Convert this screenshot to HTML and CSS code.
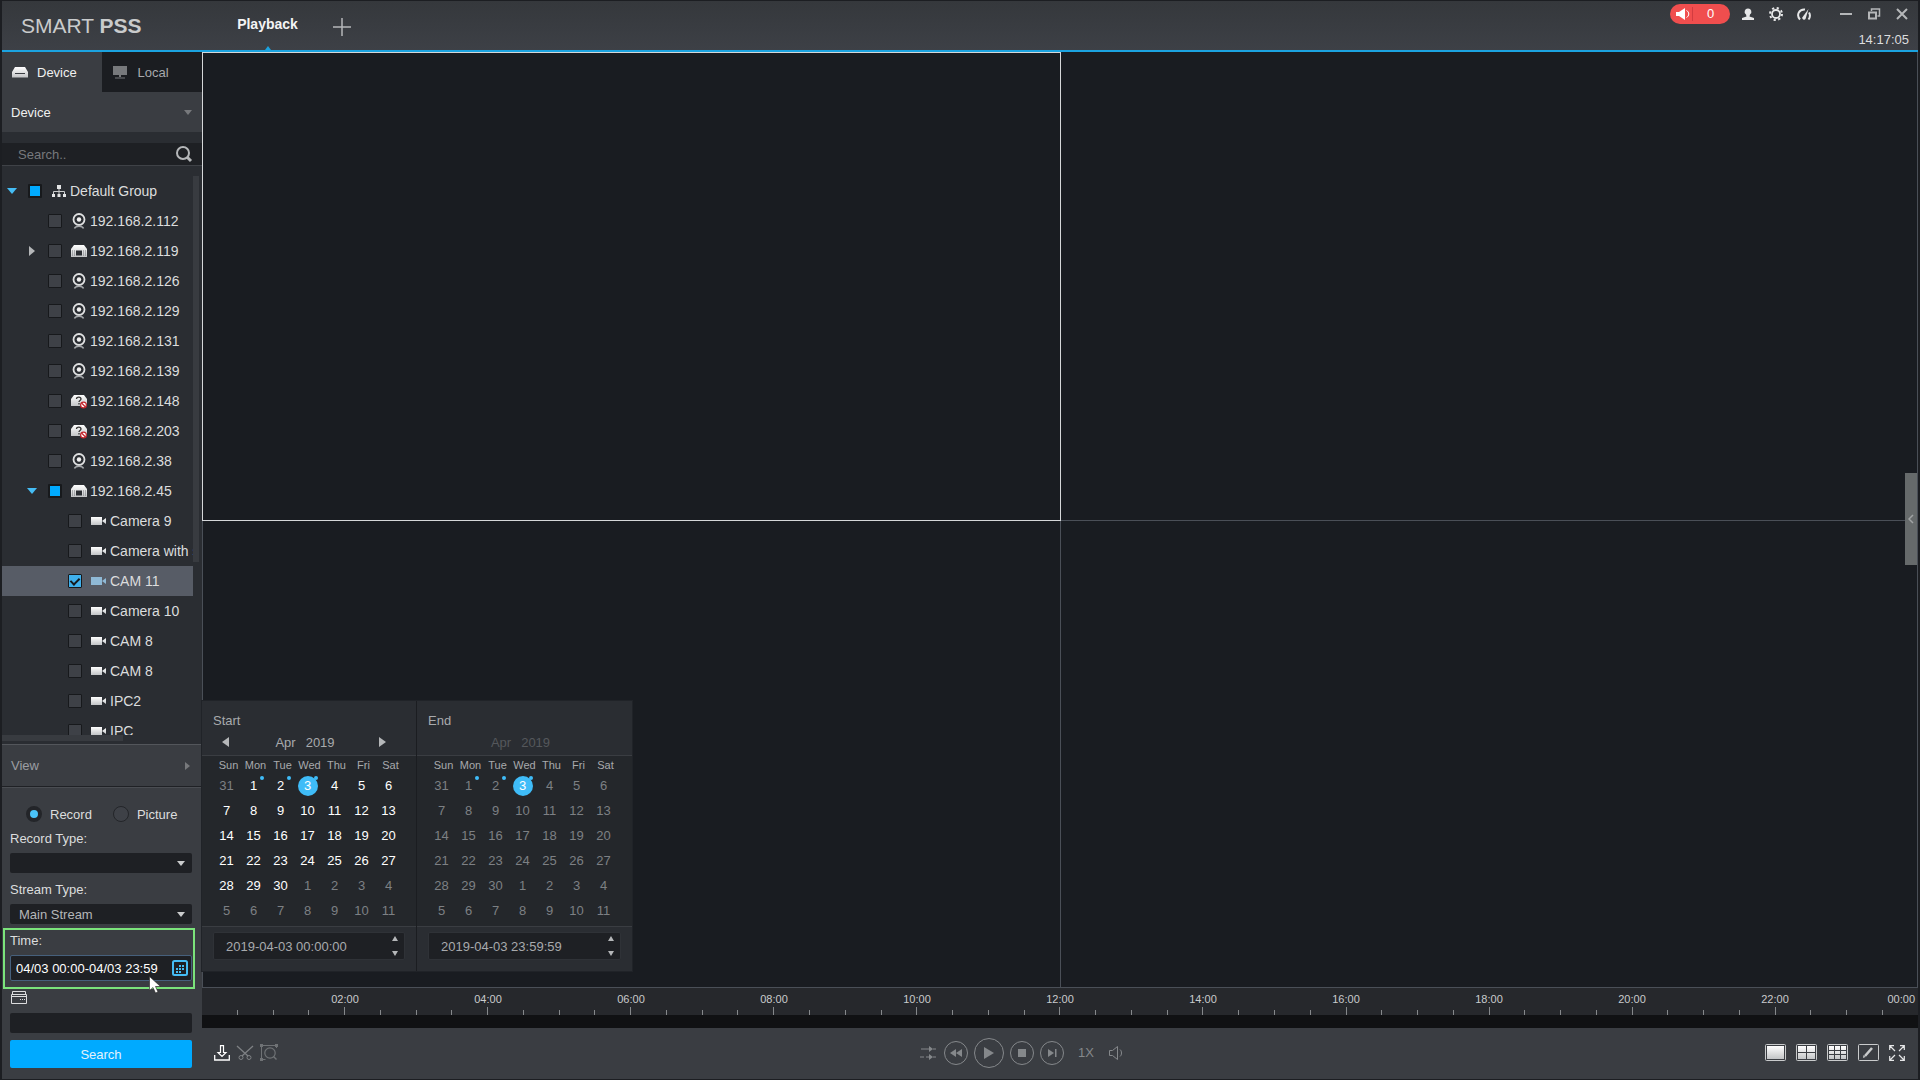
FILE: index.html
```html
<!DOCTYPE html>
<html lang="en">
<head>
  <meta charset="UTF-8" />
  <meta name="viewport" content="width=device-width, initial-scale=1.0" />
  <title>SMART PSS</title>
  <link rel="stylesheet" href="styles.css">
</head>
<body>
  <!-- icon sprite -->
  <svg class="sprite" width="0" height="0" aria-hidden="true">
    <defs>
      <linearGradient id="metal" x1="0" y1="0" x2="0" y2="1">
        <stop offset="0" stop-color="#ffffff" />
        <stop offset="1" stop-color="#c2c4c6" />
      </linearGradient>
    </defs>
    <symbol id="i-group" viewBox="0 0 16 16">
      <path d="M6 2h4v4H6zM1 11h3v3H1zM6.500 11h3v3h-3zM12 11h3v3h-3z" fill="#e4e5e6" />
      <path d="M8 6v5M2.500 11V8.500h11V11" fill="none" stroke="#c9cbcc" />
    </symbol>
    <symbol id="i-dome" viewBox="0 0 16 16">
      <circle cx="8" cy="6.500" r="5.500" fill="none" stroke="#dfe0e1" stroke-width="1.800" />
      <circle cx="8" cy="6.500" r="2.200" fill="#f0f0f0" />
      <path d="M3.500 15.500c1-3 8-3 9 0" fill="none" stroke="#a5a8ab" stroke-width="1.400" />
    </symbol>
    <symbol id="i-nvr" viewBox="0 0 16 16">
      <path d="M3 2h10l3 4v8H0V6z" fill="url(#metal)" />
      <path d="M5 7.500h6v5H5z" fill="#2a2d32" />
      <path d="M1 8h3M1 10h3M1 12h3M12 8h3M12 10h3M12 12h3" stroke="#5a5d62" stroke-width=".8" stroke-dasharray="1 1" />
    </symbol>
    <symbol id="i-offline" viewBox="0 0 16 16">
      <path d="M3 2h10l3 4v7H0V6z" fill="url(#metal)" />
      <path d="M5.500 6c0-2.500 4.500-2.500 4.500 0 0 1.500-2 1.500-2 3M8 10v1.500" fill="none" stroke="#333" stroke-width="1.300" />
      <circle cx="12.500" cy="12" r="2.900" fill="#fff" stroke="#c3242b" stroke-width="1.200" />
      <path d="M10.500 10l4 4" stroke="#c3242b" stroke-width="1.300" />
    </symbol>
    <symbol id="i-cam" viewBox="0 0 16 16">
      <path d="M0 4h11v8H0zM11 8l4-3v6z" fill="url(#metal)" />
    </symbol>
    <symbol id="i-cam-on" viewBox="0 0 16 16">
      <path d="M0 4h11v8H0zM11 8l4-3v6z" fill="#8fb9d6" />
    </symbol>
  </svg>

  <header class="titlebar">
    <h1 class="logo">SMART <b>PSS</b></h1>
    <nav class="pages">
      <a class="page active" href="#">Playback</a>
      <button class="add-page" aria-label="Add tab">
        <svg width="18" height="18" viewBox="0 0 18 18"><path d="M9 0v18M0 9h18" stroke="#b5b7b9" stroke-width="1.500" /></svg>
      </button>
    </nav>
    <div class="status">
      <div class="status-icons">
        <button class="alarm" aria-label="Alarms">
          <svg width="14" height="12" viewBox="0 0 14 12"><path d="M0 4h3l6-4v12L3 8H0z" fill="#fff" /><path d="M10.500 2.500c3 1.500 3 5.500 0 7" fill="none" stroke="#fff" /></svg>
          <span>0</span>
        </button>
        <button class="tool" aria-label="User">
          <svg width="14" height="14" viewBox="0 0 14 14"><path d="M7 1.500a3.300 3.300 0 0 0-2 6L5.500 9.500 1 11v2h12v-2L8.500 9.500 9 7.500a3.300 3.300 0 0 0-2-6z" fill="#e6e7e8" /></svg>
        </button>
        <button class="tool" aria-label="Settings">
          <svg width="14" height="14" viewBox="0 0 14 14"><circle cx="7" cy="7" r="4" fill="none" stroke="#e6e7e8" stroke-width="1.800" /><circle cx="7" cy="7" r="6" fill="none" stroke="#e6e7e8" stroke-width="2" stroke-dasharray="2.200 2.510" /></svg>
        </button>
        <button class="tool" aria-label="System load">
          <svg width="14" height="14" viewBox="0 0 14 14"><path d="M3 12.500C-1 8 2 2 8 2.500M12 5.500c1.500 2.500 1 5-.5 7" fill="none" stroke="#e6e7e8" stroke-width="2" /><path d="M11.500 2L8.500 12a1.800 1.800 0 0 1-3.200-1.500z" fill="#e6e7e8" /></svg>
        </button>
        <button class="tool min" aria-label="Minimize">
          <svg width="14" height="14" viewBox="0 0 14 14"><path d="M1 7h12" stroke="#b5b7b9" stroke-width="2" /></svg>
        </button>
        <button class="tool" aria-label="Restore">
          <svg width="14" height="14" viewBox="0 0 14 14"><path d="M4.500 4V2h8v7h-2" fill="none" stroke="#b5b7b9" stroke-width="1.500" /><path d="M2 5.500h7v6H2z" fill="none" stroke="#b5b7b9" stroke-width="2" /></svg>
        </button>
        <button class="tool" aria-label="Close">
          <svg width="14" height="14" viewBox="0 0 14 14"><path d="M2 2l10 10M12 2L2 12" stroke="#b5b7b9" stroke-width="2" /></svg>
        </button>
      </div>
      <time class="clock">14:17:05</time>
    </div>
  </header>

  <div class="main">
    <aside class="sidebar">
      <div class="tabs">
        <button class="tab active">
          <svg width="16" height="12" viewBox="0 0 16 12"><path d="M3 1h10l3 5v5.500H0V6z" fill="url(#metal)" /><path d="M3 7.500h10" stroke="#3a3d42" /></svg>
          Device
        </button>
        <button class="tab">
          <svg width="14" height="13" viewBox="0 0 14 13"><path d="M0 0h14v9H0zM2 11.500h10v1H2zM6 9h2v2H6z" fill="#77797c" /></svg>
          Local
        </button>
      </div>
      <button class="section-title">Device <span class="caret down dim"></span></button>
      <div class="search">
        <input type="text" placeholder="Search.." aria-label="Search devices" />
        <svg width="18" height="18" viewBox="0 0 18 18"><circle cx="8" cy="8" r="6" fill="none" stroke="#b5b7b9" stroke-width="2" /><path d="M12 12l4 4" stroke="#b5b7b9" stroke-width="3" /></svg>
      </div>

      <div class="tree-wrap">
        <div class="tree">
          <div class="node"><button class="twist open" aria-label="Collapse"></button><label><input type="checkbox" class="partial" /><svg><use href="#i-group" /></svg>Default Group</label></div>
          <div class="node l1"><span class="twist"></span><label><input type="checkbox" /><svg><use href="#i-dome" /></svg>192.168.2.112</label></div>
          <div class="node l1"><button class="twist closed" aria-label="Expand"></button><label><input type="checkbox" /><svg><use href="#i-nvr" /></svg>192.168.2.119</label></div>
          <div class="node l1"><span class="twist"></span><label><input type="checkbox" /><svg><use href="#i-dome" /></svg>192.168.2.126</label></div>
          <div class="node l1"><span class="twist"></span><label><input type="checkbox" /><svg><use href="#i-dome" /></svg>192.168.2.129</label></div>
          <div class="node l1"><span class="twist"></span><label><input type="checkbox" /><svg><use href="#i-dome" /></svg>192.168.2.131</label></div>
          <div class="node l1"><span class="twist"></span><label><input type="checkbox" /><svg><use href="#i-dome" /></svg>192.168.2.139</label></div>
          <div class="node l1"><span class="twist"></span><label><input type="checkbox" /><svg><use href="#i-offline" /></svg>192.168.2.148</label></div>
          <div class="node l1"><span class="twist"></span><label><input type="checkbox" /><svg><use href="#i-offline" /></svg>192.168.2.203</label></div>
          <div class="node l1"><span class="twist"></span><label><input type="checkbox" /><svg><use href="#i-dome" /></svg>192.168.2.38</label></div>
          <div class="node l1"><button class="twist open" aria-label="Collapse"></button><label><input type="checkbox" class="partial" /><svg><use href="#i-nvr" /></svg>192.168.2.45</label></div>
          <div class="node l2"><span class="twist"></span><label><input type="checkbox" /><svg><use href="#i-cam" /></svg>Camera 9</label></div>
          <div class="node l2"><span class="twist"></span><label><input type="checkbox" /><svg><use href="#i-cam" /></svg>Camera with s</label></div>
          <div class="node l2 selected"><span class="twist"></span><label><input type="checkbox" checked /><svg><use href="#i-cam-on" /></svg>CAM 11</label></div>
          <div class="node l2"><span class="twist"></span><label><input type="checkbox" /><svg><use href="#i-cam" /></svg>Camera 10</label></div>
          <div class="node l2"><span class="twist"></span><label><input type="checkbox" /><svg><use href="#i-cam" /></svg>CAM 8</label></div>
          <div class="node l2"><span class="twist"></span><label><input type="checkbox" /><svg><use href="#i-cam" /></svg>CAM 8</label></div>
          <div class="node l2"><span class="twist"></span><label><input type="checkbox" /><svg><use href="#i-cam" /></svg>IPC2</label></div>
          <div class="node l2"><span class="twist"></span><label><input type="checkbox" /><svg><use href="#i-cam" /></svg>IPC</label></div>
        </div>
        <div class="vbar"></div>
      </div>
      <div class="hbar"></div>

      <button class="section-title view">View <span class="caret right dim"></span></button>

      <form class="query">
        <div class="kinds">
          <label><input type="radio" name="kind" checked />Record</label>
          <label><input type="radio" name="kind" />Picture</label>
        </div>
        <label class="caption" for="recordType">Record Type:</label>
        <div class="select"><select id="recordType"><option></option></select></div>
        <label class="caption" for="streamType">Stream Type:</label>
        <div class="select"><select id="streamType"><option>Main Stream</option></select></div>
        <div class="time">
          <label for="timeRange">Time:</label>
          <div class="range">
            <input type="text" id="timeRange" value="04/03 00:00-04/03 23:59" />
            <button type="button" aria-label="Open calendar">
              <svg width="16" height="16" viewBox="0 0 16 16"><rect x="1" y="1" width="14" height="14" rx="1.500" fill="none" stroke="#45bdf5" stroke-width="2" /><path d="M7 6h6M4 9h9M4 12h6" stroke="#45bdf5" stroke-width="2" stroke-dasharray="2 1" /></svg>
            </button>
          </div>
          <svg class="pointer" width="12" height="18" viewBox="0 0 12 18"><path d="M.5.500v14l3.500-3 2.500 5.500 2.500-1-2.500-5.500h5z" fill="#fff" stroke="#222" stroke-width=".6" /></svg>
        </div>
        <label class="card" for="cardNumber" aria-label="Card number">
          <svg width="16" height="13" viewBox="0 0 16 13"><path d="M1.500 3V.500h13V3M.5 3.500h15v9H.5zM.5 5.500h15" fill="none" stroke="#dcddde" /><path d="M9 8.500h5" stroke="#dcddde" stroke-dasharray="1 1" /></svg>
        </label>
        <input type="text" id="cardNumber" class="box" />
        <button type="submit" class="submit">Search</button>
      </form>
    </aside>

    <main class="workspace">
      <section class="video">
        <div class="cell active"></div>
        <div class="cell"></div>
        <div class="cell"></div>
        <div class="cell"></div>
        <button class="drawer" aria-label="Show panel">
          <svg width="6" height="10" viewBox="0 0 6 10"><path d="M5 1L1 5l4 4" fill="none" stroke="#a0a3a4" stroke-width="1.500" /></svg>
        </button>

        <div class="calendar">
          <div class="pane">
            <div class="pane-head">
              <h2>Start</h2>
              <div class="month">
                <button class="caret left" aria-label="Previous month"></button>
                <span class="label"><span>Apr</span><span>2019</span></span>
                <button class="caret right" aria-label="Next month"></button>
              </div>
            </div>
            <table>
              <thead><tr><th>Sun</th><th>Mon</th><th>Tue</th><th>Wed</th><th>Thu</th><th>Fri</th><th>Sat</th></tr></thead>
              <tbody>
                <tr><td class="out">31</td><td class="has">1</td><td class="has">2</td><td class="has today"><span>3</span></td><td>4</td><td>5</td><td>6</td></tr>
                <tr><td>7</td><td>8</td><td>9</td><td>10</td><td>11</td><td>12</td><td>13</td></tr>
                <tr><td>14</td><td>15</td><td>16</td><td>17</td><td>18</td><td>19</td><td>20</td></tr>
                <tr><td>21</td><td>22</td><td>23</td><td>24</td><td>25</td><td>26</td><td>27</td></tr>
                <tr><td>28</td><td>29</td><td>30</td><td class="out">1</td><td class="out">2</td><td class="out">3</td><td class="out">4</td></tr>
                <tr><td class="out">5</td><td class="out">6</td><td class="out">7</td><td class="out">8</td><td class="out">9</td><td class="out">10</td><td class="out">11</td></tr>
              </tbody>
            </table>
            <div class="pane-foot">
              <div class="stamp">
                <input type="text" value="2019-04-03 00:00:00" aria-label="Start time" />
                <div class="spin"><button class="caret up" aria-label="Later"></button><button class="caret down" aria-label="Earlier"></button></div>
              </div>
            </div>
          </div>
          <div class="pane locked">
            <div class="pane-head">
              <h2>End</h2>
              <div class="month">
                <span class="label"><span>Apr</span><span>2019</span></span>
              </div>
            </div>
            <table>
              <thead><tr><th>Sun</th><th>Mon</th><th>Tue</th><th>Wed</th><th>Thu</th><th>Fri</th><th>Sat</th></tr></thead>
              <tbody>
                <tr><td>31</td><td class="has">1</td><td class="has">2</td><td class="has today"><span>3</span></td><td>4</td><td>5</td><td>6</td></tr>
                <tr><td>7</td><td>8</td><td>9</td><td>10</td><td>11</td><td>12</td><td>13</td></tr>
                <tr><td>14</td><td>15</td><td>16</td><td>17</td><td>18</td><td>19</td><td>20</td></tr>
                <tr><td>21</td><td>22</td><td>23</td><td>24</td><td>25</td><td>26</td><td>27</td></tr>
                <tr><td>28</td><td>29</td><td>30</td><td>1</td><td>2</td><td>3</td><td>4</td></tr>
                <tr><td>5</td><td>6</td><td>7</td><td>8</td><td>9</td><td>10</td><td>11</td></tr>
              </tbody>
            </table>
            <div class="pane-foot">
              <div class="stamp">
                <input type="text" value="2019-04-03 23:59:59" aria-label="End time" />
                <div class="spin"><button class="caret up" aria-label="Later"></button><button class="caret down" aria-label="Earlier"></button></div>
              </div>
            </div>
          </div>
        </div>
      </section>

      <section class="timeline">
        <div class="hours">
          <span></span><span>02:00</span><span>04:00</span><span>06:00</span><span>08:00</span><span>10:00</span><span>12:00</span><span>14:00</span><span>16:00</span><span>18:00</span><span>20:00</span><span>22:00</span><span class="last">00:00</span>
        </div>
        <div class="ticks">
          <i></i><i></i><i></i><i></i><i></i><i></i><i></i><i></i><i></i><i></i><i></i><i></i>
          <i></i><i></i><i></i><i></i><i></i><i></i><i></i><i></i><i></i><i></i><i></i><i></i>
          <i></i><i></i><i></i><i></i><i></i><i></i><i></i><i></i><i></i><i></i><i></i><i></i>
          <i></i><i></i><i></i><i></i><i></i><i></i><i></i><i></i><i></i><i></i><i></i><i></i>
        </div>
        <div class="track"></div>
      </section>

      <footer class="controls">
        <div class="group clip">
          <button aria-label="Export"><svg width="16" height="16" viewBox="0 0 16 16"><path d="M.7 10v5h14.600v-5" fill="none" stroke="#fff" stroke-width="1.300" /><path d="M6.500.700h3v6.800h2.500L8 11.500 4 7.500h2.500z" fill="none" stroke="#fff" stroke-width="1.200" /></svg></button>
          <button aria-label="Cut"><svg width="18" height="16" viewBox="0 0 18 16"><path d="M1 1l11 10M17 1L6 11" fill="none" stroke="#7e8184" stroke-width="1.300" /><circle cx="5" cy="12.500" r="2" fill="none" stroke="#7e8184" /><circle cx="13" cy="12.500" r="2" fill="none" stroke="#7e8184" /></svg></button>
          <button aria-label="Smart search"><svg width="18" height="17" viewBox="0 0 18 17"><path d="M2 1.500h14M1.500 2v13.500h4M16.500 2v2" fill="none" stroke="#6f7275" /><path d="M0 0h3v3H0zM15 0h3v3h-3zM0 14h3v3H0z" fill="#6f7275" /><circle cx="10" cy="9" r="5.200" fill="none" stroke="#6f7275" stroke-width="1.200" /><path d="M13.500 12.500l3 3" stroke="#6f7275" stroke-width="1.400" /></svg></button>
        </div>
        <div class="group player">
          <button aria-label="Sync"><svg width="16" height="14" viewBox="0 0 16 14"><path d="M1 3h9M13 3h3M0 11h4M6 11h4M13 11h3" stroke="#85888b" /><path d="M9 0l4 3-4 3zM9 8l4 3-4 3z" fill="#85888b" /></svg></button>
          <button class="round" aria-label="Rewind"><svg width="12" height="8" viewBox="0 0 12 8"><path d="M6 0v8L0 4zM12 0v8L6 4z" fill="#85888b" /></svg></button>
          <button class="round big" aria-label="Play"><svg width="12" height="12" viewBox="0 0 12 12"><path d="M1 0l10 6L1 12z" fill="#85888b" /></svg></button>
          <button class="round" aria-label="Stop"><svg width="8" height="8" viewBox="0 0 8 8"><path d="M0 0h8v8H0z" fill="#85888b" /></svg></button>
          <button class="round" aria-label="Next frame"><svg width="9" height="8" viewBox="0 0 9 8"><path d="M0 0l6 4-6 4zM7 0h1.500v8H7z" fill="#85888b" /></svg></button>
          <button class="speed">1X</button>
          <button aria-label="Volume"><svg width="14" height="14" viewBox="0 0 14 14"><path d="M.5 4.500h3l5-4v13l-5-4h-3z" fill="none" stroke="#85888b" /><path d="M11 3.500c2 1.500 2 5.500 0 7" fill="none" stroke="#85888b" /></svg></button>
        </div>
        <div class="group layout">
          <button aria-label="1 window"><svg width="21" height="17" viewBox="0 0 21 17"><rect x=".5" y=".5" width="20" height="16" rx="1" fill="none" stroke="#c9cbcc" /><path d="M2 2h17v13H2z" fill="url(#metal)" /></svg></button>
          <button aria-label="4 windows"><svg width="21" height="17" viewBox="0 0 21 17"><rect x=".5" y=".5" width="20" height="16" rx="1" fill="none" stroke="#c9cbcc" /><path d="M2 2h8v6H2zM11 2h8v6h-8zM2 9h8v6H2zM11 9h8v6h-8z" fill="url(#metal)" /></svg></button>
          <button aria-label="9 windows"><svg width="21" height="17" viewBox="0 0 21 17"><rect x=".5" y=".5" width="20" height="16" rx="1" fill="none" stroke="#c9cbcc" /><path d="M2 2h5v4H2zM8 2h5v4H8zM14 2h5v4h-5zM2 7h5v3H2zM8 7h5v3H8zM14 7h5v3h-5zM2 11h5v4H2zM8 11h5v4H8zM14 11h5v4h-5z" fill="url(#metal)" /></svg></button>
          <button aria-label="Custom layout"><svg width="21" height="17" viewBox="0 0 21 17"><rect x=".5" y=".5" width="20" height="16" rx="1" fill="none" stroke="#c9cbcc" /><path d="M7 12l7-8" stroke="#c9cbcc" stroke-width="2.500" /><path d="M5 14l.5-3 2 2z" fill="#c9cbcc" /></svg></button>
          <button aria-label="Full screen"><svg width="16" height="16" viewBox="0 0 16 16"><path d="M5 .700H.7V5M11 .700h4.300V5M5 15.300H.7V11M11 15.300h4.300V11M1 1l5 5M15 1l-5 5M1 15l5-5M15 15l-5-5" fill="none" stroke="#e6e7e8" stroke-width="1.200" /></svg></button>
        </div>
      </footer>
    </main>
  </div>
</body>
</html>
```

FILE: styles.css
```css
:root {
  --panel: #3a3d42;
  --tree: #2a2d32;
  --field: #1e2024;
  --screen: #191c21;
  --line: #4a4f57;
  --accent: #00aaff;
  --text: #dcddde;
  --muted: #9b9ea2;
}
* {
  box-sizing: border-box;
}
body {
  margin: 0;
  height: 100vh;
  display: flex;
  flex-direction: column;
  border: 1px solid #1c1e22;
  border-width: 1px 2px 1px 2px;
  background: var(--panel);
  color: var(--text);
  font-family: "Liberation Sans", Arial, sans-serif;
  font-size: 13px;
  overflow: hidden;
}
button, input, select {
  font: inherit;
  color: inherit;
  margin: 0;
  padding: 0;
  border: none;
  background: none;
  outline: none;
}
button {
  cursor: pointer;
}
svg {
  display: block;
  flex: none;
}
.sprite {
  position: absolute;
}

/* triangles */
.caret {
  width: 0;
  height: 0;
  flex: none;
  border: 0 solid transparent;
  color: #b5b7b9;
}
.caret.dim { color: #77797c; }
.caret.down { border-width: 5px 4px 0; border-top-color: currentColor; }
.caret.up { border-width: 0 4px 5px; border-bottom-color: currentColor; }
.caret.left { border-width: 5px 7px 5px 0; border-right-color: currentColor; }
.caret.right { border-width: 5px 0 5px 7px; border-left-color: currentColor; }

/* title bar */
.titlebar {
  flex: none;
  height: 51px;
  display: flex;
  border-bottom: 2px solid #1ba3e0;
  background: linear-gradient(#35383c, #3d4046);
}
.logo {
  width: 200px;
  margin: 0;
  padding-left: 19px;
  font-size: 21px;
  line-height: 49px;
  font-weight: normal;
  color: #c9cbcc;
}
.pages {
  flex: 1;
  display: flex;
  align-items: center;
}
.page {
  position: relative;
  width: 131px;
  line-height: 49px;
  padding-bottom: 2px;
  text-align: center;
  font-size: 14px;
  font-weight: bold;
  color: #f4f4f4;
  text-decoration: none;
}
.page.active::after {
  content: "";
  position: absolute;
  left: 50%;
  bottom: 1px;
  margin-left: -3px;
  border: 3px solid transparent;
  border-top: 0;
  border-bottom: 4px solid #1ba3e0;
}
.add-page {
  padding-top: 2px;
}
.status {
  display: flex;
  flex-direction: column;
  align-items: flex-end;
  padding: 3px 9px 0 0;
}
.status-icons {
  display: flex;
  align-items: center;
  gap: 14px;
}
.tool.min {
  margin-left: 14px;
}
.alarm {
  width: 60px;
  height: 20px;
  margin-right: -3px;
  padding-left: 6px;
  display: flex;
  align-items: center;
  border-radius: 10px;
  background: #f04e4e;
  color: #fff;
  font-size: 13px;
}
.alarm span {
  flex: 1;
  margin-left: 2px;
  padding-right: 2px;
  border-left: 1px solid #d23c40;
  text-align: center;
  line-height: 14px;
}
.clock {
  line-height: 15px;
  padding-top: 8px;
}

.main {
  flex: 1;
  min-height: 0;
  display: flex;
}

/* sidebar */
.sidebar {
  width: 200px;
  flex: none;
  display: flex;
  flex-direction: column;
  background: var(--tree);
}
.tabs {
  display: flex;
  flex: none;
}
.tab {
  flex: 1;
  height: 40px;
  display: flex;
  align-items: center;
  gap: 11px;
  padding-left: 11px;
  background: #1b1d21;
  color: #a8aaad;
}
.tab.active {
  gap: 9px;
  padding-left: 10px;
  background: var(--panel);
  color: #f0f0f0;
}
.section-title {
  flex: none;
  height: 40px;
  display: flex;
  align-items: center;
  justify-content: space-between;
  padding: 0 10px 0 9px;
  background: var(--panel);
  color: #f0f0f0;
}
.section-title.view {
  height: 43px;
  border-top: 1px solid #53565b;
  border-bottom: 1px solid #1f2125;
  color: var(--muted);
}
.section-title .caret.right {
  margin-right: 2px;
  border-width: 4px 0 4px 5px;
}
.search {
  flex: none;
  height: 23px;
  margin: 11px 0 10px;
  padding: 0 9px 0 16px;
  display: flex;
  align-items: center;
  background: var(--field);
  border-bottom: 1px solid #3f4247;
}
.search input {
  flex: 1;
  min-width: 0;
}
.search input::placeholder {
  color: #77797c;
}
.tree-wrap {
  flex: 1;
  min-height: 0;
  display: flex;
}
.tree {
  flex: 1;
  min-width: 0;
  overflow: hidden;
  font-size: 14px;
}
.vbar {
  width: 6px;
  height: 69%;
  margin-right: 3px;
  background: #383b40;
}
.hbar {
  flex: none;
  width: 121px;
  height: 6px;
  margin-bottom: 3px;
  background: #383b40;
}
.node {
  height: 30px;
  display: flex;
  align-items: center;
  padding-left: 4px;
  white-space: nowrap;
}
.node.l1 { padding-left: 24px; }
.node.l2 { padding-left: 44px; }
.node.selected {
  background: #575c66;
}
.node label {
  display: flex;
  align-items: center;
}
.node svg {
  width: 16px;
  height: 16px;
  margin: 0 3px 0 9px;
}
.twist {
  flex: none;
  width: 12px;
  height: 12px;
  margin-right: 10px;
  display: flex;
  align-items: center;
  justify-content: center;
}
.twist.open::before {
  content: "";
  border: 5px solid transparent;
  border-top: 6px solid #45bdf5;
  border-bottom: 0;
}
.twist.closed::before {
  content: "";
  border: 5px solid transparent;
  border-left: 6px solid #b5b7b9;
  border-right: 0;
}
.node input {
  appearance: none;
  flex: none;
  width: 14px;
  height: 14px;
  border: 1px solid #17191c;
  border-radius: 1px;
  background: #3e4147;
}
.node input.partial {
  border-width: 2px;
  background: var(--accent);
}
.node input:checked {
  display: flex;
  align-items: center;
  justify-content: center;
  background: #3fb0ec;
}
.node input:checked::after {
  content: "";
  width: 4px;
  height: 7px;
  margin-bottom: 2px;
  border: solid #17191c;
  border-width: 0 2px 2px 0;
  transform: rotate(45deg);
}

/* search form */
.query {
  flex: none;
  display: flex;
  flex-direction: column;
  padding: 14px 10px 11px 8px;
  border-top: 1px solid #4a4d52;
  background: var(--panel);
}
.kinds {
  display: flex;
  gap: 21px;
  padding-left: 16px;
}
.kinds label {
  display: flex;
  align-items: center;
  gap: 8px;
  height: 24px;
}
.kinds input {
  appearance: none;
  width: 16px;
  height: 16px;
  border: 1px solid #232529;
  border-radius: 50%;
  background: #3e4147;
}
.kinds input:checked {
  border-width: 4px;
  border-color: #232529;
  background: #4ac3f8;
}
.caption {
  padding-top: 5px;
  line-height: 15px;
}
.select {
  position: relative;
  margin-top: 7px;
  margin-bottom: 4px;
}
.select select {
  appearance: none;
  display: block;
  width: 100%;
  height: 20px;
  padding-left: 9px;
  border-radius: 2px;
  background: var(--field);
  color: #b5b7b9;
}
.select::after {
  content: "";
  position: absolute;
  right: 7px;
  top: 8px;
  border: 4px solid transparent;
  border-top: 5px solid #c9cbcc;
  border-bottom: 0;
}
.time {
  position: relative;
  margin: 0 -3px 0 -7px;
  padding: 3px 1px 6px 5px;
  border: 2px solid #7be37b;
}
.time label {
  display: block;
  line-height: 15px;
}
.range {
  height: 26px;
  margin-top: 7px;
  padding: 0 3px 0 5px;
  display: flex;
  align-items: center;
  border: 1px solid #46607c;
  border-radius: 2px;
  background: var(--field);
  color: #fff;
}
.range input {
  flex: 1;
  min-width: 0;
}
.pointer {
  position: absolute;
  right: 32px;
  bottom: -7px;
}
.card {
  padding: 2px 0 9px 1px;
}
.box {
  height: 20px;
  border-radius: 2px;
  background: var(--field);
}
.submit {
  height: 28px;
  margin-top: 7px;
  border-radius: 2px;
  background: var(--accent);
  color: #e4f3fb;
}

/* video grid */
.workspace {
  flex: 1;
  min-width: 0;
  display: flex;
  flex-direction: column;
}
.video {
  position: relative;
  flex: 1;
  display: grid;
  grid-template-columns: 1fr 1fr;
  grid-template-rows: 1fr 1fr;
  background: var(--screen);
  border-right: 1px solid var(--line);
}
.cell {
  border: 1px solid var(--line);
  border-width: 1px 0 0 1px;
}
.cell:nth-child(2) {
  border-top: none;
}
.cell.active {
  z-index: 1;
  margin: 0 -1px -1px 0;
  border: 1px solid #d5d7d9;
}
.drawer {
  position: absolute;
  right: 0;
  top: 45%;
  width: 12px;
  height: 92px;
  display: flex;
  align-items: center;
  justify-content: center;
  background: #666a6b;
}

/* calendar popup */
.calendar {
  position: absolute;
  z-index: 2;
  left: 0;
  bottom: 16px;
  display: flex;
  background: var(--tree);
  color: #a8aaad;
  box-shadow: 0 0 0 1px #202328;
}
.pane {
  width: 215px;
}
.pane:first-child {
  border-right: 1px solid #1b1d21;
}
.pane-head {
  height: 55px;
  padding: 12px 10px 0 11px;
  border-bottom: 1px solid #3a3d42;
}
.pane h2 {
  margin: 0;
  font-size: 13px;
  line-height: 15px;
  font-weight: normal;
}
.month {
  display: flex;
  align-items: center;
  height: 28px;
  padding: 0 20px 0 9px;
}
.month .label {
  flex: 1;
  display: flex;
  justify-content: center;
  gap: 10px;
  padding-left: 2px;
}
.locked .month {
  color: #55585c;
}
.pane table {
  display: block;
  padding: 0 0 3px 11px;
  border-collapse: collapse;
  border-spacing: 0;
  background: #24272b;
}
.pane th, .pane td {
  width: 27px;
  min-width: 27px;
  height: 25px;
  padding: 0;
  text-align: center;
  line-height: 25px;
}
.pane th {
  height: 17px;
  padding: 2px 0 0 4px;
  font-size: 11px;
  line-height: 15px;
  font-weight: normal;
}
.pane td {
  position: relative;
  color: #fff;
}
.pane td.out, .locked td {
  color: #7d8084;
}
.pane td.today span {
  display: block;
  width: 20px;
  margin: 0 auto;
  border-radius: 50%;
  background: #3fbcf8;
  color: #fff;
  line-height: 20px;
}
.pane td.has::after {
  content: "";
  position: absolute;
  right: 3px;
  top: 3px;
  width: 4px;
  height: 4px;
  border-radius: 50%;
  background: #3fbcf8;
}
.pane-foot {
  padding: 5px 11px 11px;
  border-top: 1px solid #3a3d42;
}
.stamp {
  height: 28px;
  display: flex;
  align-items: center;
  padding: 0 6px 0 12px;
  border: 1px solid #2f3237;
  border-radius: 2px;
  background: var(--field);
}
.stamp input {
  flex: 1;
  min-width: 0;
}
.spin {
  display: flex;
  flex-direction: column;
  gap: 10px;
}
.spin .caret.up { border-width: 0 3px 5px; }
.spin .caret.down { border-width: 5px 3px 0; }

/* timeline */
.timeline {
  flex: none;
  border-top: 1px solid var(--line);
  background: #26282c;
}
.hours {
  display: grid;
  grid-template-columns: 1fr repeat(11, 2fr) 1fr;
  padding-top: 4px;
  text-align: center;
  font-size: 11px;
  line-height: 15px;
  color: #c9cbcc;
}
.hours .last {
  text-align: right;
  padding-right: 3px;
}
.ticks {
  height: 8px;
  display: flex;
  align-items: flex-end;
}
.ticks i {
  flex: 1;
  height: 5px;
  border-right: 1px solid #85888b;
}
.ticks i:nth-child(4n) {
  height: 8px;
}
.ticks i:last-child {
  border: none;
}
.track {
  height: 13px;
  background: #101113;
}

/* playback controls */
.controls {
  flex: none;
  height: 51px;
  display: flex;
  align-items: center;
  justify-content: space-between;
  padding: 0 13px 2px 12px;
}
.group {
  display: flex;
  align-items: center;
}
.clip {
  gap: 6px;
}
.player {
  gap: 6px;
  color: #85888b;
}
.round {
  width: 24px;
  height: 24px;
  display: flex;
  align-items: center;
  justify-content: center;
  border: 1px solid #85888b;
  border-radius: 50%;
}
.round.big {
  width: 30px;
  height: 30px;
}
.player button:first-child {
  margin-right: 2px;
}
.speed {
  margin: 0 9px 0 8px;
}
.layout {
  gap: 10px;
}
```
